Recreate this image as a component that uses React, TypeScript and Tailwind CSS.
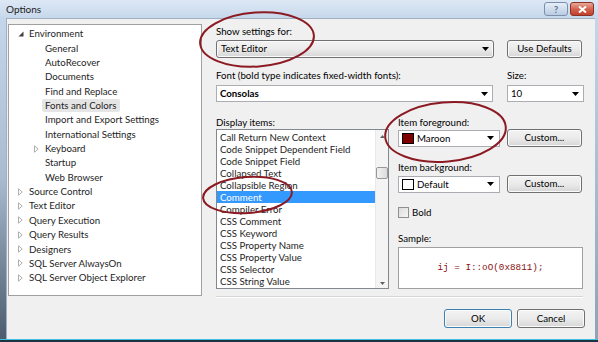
import React from "react";

const BTN =
  "flex items-center justify-center rounded-[3px] border border-[#707070] bg-gradient-to-b from-[#f3f3f3] via-[#ebebeb] to-[#d6d6d6] shadow-[inset_0_0_0_1px_#fbfbfb] leading-none";

function Arrow() {
  return (
    <svg width="7" height="4" viewBox="0 0 7 4">
      <path d="M0 0H7L3.5 4Z" fill="#000" />
    </svg>
  );
}

function Expanded() {
  return (
    <svg width="6" height="6" viewBox="0 0 6 6">
      <path d="M5.5 0.5V5.5H0.5Z" fill="#404040" />
    </svg>
  );
}

function Collapsed() {
  return (
    <svg width="5" height="8" viewBox="0 0 5 8">
      <path d="M0.5 0.8L4.2 4L0.5 7.2Z" fill="#fff" stroke="#a6a6a6" strokeWidth="0.9" />
    </svg>
  );
}

type Node = { label: string; level: 0 | 1; icon?: "exp" | "col"; selected?: boolean };

const tree: Node[] = [
  { label: "Environment", level: 0, icon: "exp" },
  { label: "General", level: 1 },
  { label: "AutoRecover", level: 1 },
  { label: "Documents", level: 1 },
  { label: "Find and Replace", level: 1 },
  { label: "Fonts and Colors", level: 1, selected: true },
  { label: "Import and Export Settings", level: 1 },
  { label: "International Settings", level: 1 },
  { label: "Keyboard", level: 1, icon: "col" },
  { label: "Startup", level: 1 },
  { label: "Web Browser", level: 1 },
  { label: "Source Control", level: 0, icon: "col" },
  { label: "Text Editor", level: 0, icon: "col" },
  { label: "Query Execution", level: 0, icon: "col" },
  { label: "Query Results", level: 0, icon: "col" },
  { label: "Designers", level: 0, icon: "col" },
  { label: "SQL Server AlwaysOn", level: 0, icon: "col" },
  { label: "SQL Server Object Explorer", level: 0, icon: "col" },
];

const items = [
  "Call Return New Context",
  "Code Snippet Dependent Field",
  "Code Snippet Field",
  "Collapsed Text",
  "Collapsible Region",
  "Comment",
  "Compiler Error",
  "CSS Comment",
  "CSS Keyword",
  "CSS Property Name",
  "CSS Property Value",
  "CSS Selector",
  "CSS String Value",
];

export default function App() {
  return (
    <div className="relative h-[342px] w-[598px] overflow-hidden bg-[#c5d6ea] font-['Lato',sans-serif] text-[9.7px] text-black">
      {/* title bar */}
      <div className="flex h-[18px] items-start bg-gradient-to-b from-[#dde8f5] to-[#c7d8eb]">
        <div className="pl-[6px] pt-[3px] text-[10px] leading-[12px] text-[#1b1b1b]">Options</div>
        <div className="ml-auto flex gap-[2px] pr-[4px] pt-[2px]">
          <div className="flex h-[14px] w-[24px] items-center justify-center rounded-[3px] border border-[#7d8fa8] bg-gradient-to-b from-[#e6eef8] to-[#b9cce3] text-[9px] font-bold leading-none text-[#5a6a80]">
            ?
          </div>
          <div className="flex h-[14px] w-[24px] items-center justify-center rounded-[3px] border border-[#8a3228] bg-gradient-to-b from-[#e8a89a] via-[#d3634f] to-[#c0402c]">
            <svg width="9" height="7" viewBox="0 0 9 7">
              <path d="M1 0.5L8 6.5M8 0.5L1 6.5" stroke="#fff" strokeWidth="2" />
            </svg>
          </div>
        </div>
      </div>

      {/* body */}
      <div className="flex h-[321px]">
        <div className="w-[6px] bg-gradient-to-b from-[#c5d6ea] via-[#a9bbd0] to-[#4d5d6e]" />
        <div className="flex w-[589px] border-l border-t border-[#9fb0c4] bg-[#f0f0f0]">
          {/* tree */}
          <div className="ml-[1px] mt-[5px] h-[272px] w-[194px] border border-[#a0a0a0] bg-white pt-[1.5px]">
            {tree.map((n) => (
              <div
                key={n.label}
                className={`flex h-[14.36px] items-center ${n.level === 0 ? "pl-[9px]" : "pl-[25px]"}`}
              >
                <div className="flex w-[11px] items-center">
                  {n.icon === "exp" ? <Expanded /> : n.icon === "col" ? <Collapsed /> : null}
                </div>
                <div
                  className={`whitespace-nowrap leading-[13px] ${
                    n.selected ? "-ml-[3.5px] rounded-[2px] bg-[#e5e5e5] px-[3.5px]" : ""
                  } text-[#1e1e1e]`}
                >
                  {n.label}
                </div>
              </div>
            ))}
          </div>

          {/* right panel */}
          <div className="ml-[14px] flex w-[369px] flex-col">
            <div className="mt-[6px] leading-[12px]">Show settings for:</div>
            <div className="mt-[3px] flex">
              <div className={`${BTN} h-[18px] w-[278px] !justify-between pl-[4px] pr-[4px]`}>
                <span>Text Editor</span>
                <Arrow />
              </div>
              <div className={`${BTN} ml-[13px] h-[18px] w-[75px]`}>Use Defaults</div>
            </div>

            <div className="mt-[11px] flex leading-[12px]">
              <div className="w-[291px]">Font (bold type indicates fixed-width fonts):</div>
              <div>Size:</div>
            </div>
            <div className="mt-[4px] flex">
              <div className="flex h-[17px] w-[277px] items-center justify-between border border-[#abadb3] bg-white pl-[3px] pr-[4px]">
                <span className="font-bold">Consolas</span>
                <Arrow />
              </div>
              <div className="ml-[14px] flex h-[17px] w-[77px] items-center justify-between border border-[#abadb3] bg-white pl-[3px] pr-[4px]">
                <span>10</span>
                <Arrow />
              </div>
            </div>

            <div className="flex">
              {/* display items */}
              <div className="flex w-[173px] flex-col">
                <div className="mt-[14px] leading-[12px]">Display items:</div>
                <div className="mt-[1px] flex h-[160px] border border-[#828790] bg-white">
                  <div className="flex-1 pt-[0.7px]">
                    {items.map((t) => (
                      <div
                        key={t}
                        className={`flex h-[12.05px] items-center whitespace-nowrap pl-[3px] leading-[12px] ${
                          t === "Comment" ? "bg-[#3399ff] text-white" : "text-[#1e1e1e]"
                        }`}
                      >
                        {t}
                      </div>
                    ))}
                  </div>
                  <div className="relative w-[13px] border-l border-[#e8e8e8] bg-[#f4f4f4]">
                    <div className="flex h-[12px] items-center justify-center">
                      <svg width="5" height="3" viewBox="0 0 5 3">
                        <path d="M0 3H5L2.5 0Z" fill="#606060" />
                      </svg>
                    </div>
                    <div className="ml-[0px] mt-[25px] h-[12px] w-[12px] rounded-[2px] border border-[#979797] bg-gradient-to-r from-[#f2f2f2] to-[#dcdcdc]" />
                    <div className="absolute bottom-[3px] left-0 flex w-full justify-center">
                      <svg width="5" height="3" viewBox="0 0 5 3">
                        <path d="M0 0H5L2.5 3Z" fill="#606060" />
                      </svg>
                    </div>
                  </div>
                </div>
              </div>

              {/* item settings */}
              <div className="ml-[9px] flex w-[187px] flex-col">
                <div className="mt-[14px] leading-[12px]">Item foreground:</div>
                <div className="mt-[1px] flex items-center">
                  <div className="flex h-[17px] w-[102px] items-center border border-[#abadb3] bg-white pl-[3px] pr-[5px]">
                    <div className="h-[11px] w-[12px] border border-black bg-[#800000]" />
                    <span className="ml-[3px]">Maroon</span>
                    <span className="ml-auto">
                      <Arrow />
                    </span>
                  </div>
                  <div className={`${BTN} ml-[7px] h-[18px] w-[75px]`}>Custom...</div>
                </div>

                <div className="mt-[14px] leading-[12px]">Item background:</div>
                <div className="mt-[2px] flex items-center">
                  <div className="flex h-[17px] w-[102px] items-center border border-[#abadb3] bg-white pl-[3px] pr-[5px]">
                    <div className="h-[11px] w-[12px] border border-black bg-white" />
                    <span className="ml-[3px]">Default</span>
                    <span className="ml-auto">
                      <Arrow />
                    </span>
                  </div>
                  <div className={`${BTN} ml-[7px] h-[18px] w-[75px]`}>Custom...</div>
                </div>

                <div className="mt-[13px] flex items-center">
                  <div className="h-[11px] w-[11px] border border-[#8e8f8f] bg-gradient-to-br from-[#dcdcdc] to-[#f6f6f6]" />
                  <span className="ml-[3px] leading-[12px]">Bold</span>
                </div>

                <div className="mt-[14px] leading-[12px]">Sample:</div>
                <div className="mt-[3px] flex h-[42px] w-[185px] items-center justify-center border border-[#a0a0a0] bg-white">
                  <span className="font-['Liberation_Mono',monospace] text-[9.3px] text-[#8a1010]">
                    ij = I::oO(0x8811);
                  </span>
                </div>
              </div>
            </div>

            <div className="mt-[7px] h-[2px] w-[367px] border-t border-b border-t-[#d5d5d5] border-b-white" />

            <div className="mt-[11px] flex justify-end gap-[5px]">
              <div className={`${BTN} h-[19px] w-[68px] !border-[#3c7fb1] shadow-[inset_0_0_0_1px_#bde6fa]`}>OK</div>
              <div className={`${BTN} h-[19px] w-[68px]`}>Cancel</div>
            </div>
          </div>
        </div>
        <div className="w-[3px] bg-gradient-to-b from-[#c5d6ea] to-[#8fa2b8]" />
      </div>
      <div className="h-[1px] bg-[#3cc2e4]" />
      <div className="h-[2px] bg-[#1d3440]" />

      {/* annotation ellipses */}
      <svg className="pointer-events-none absolute left-0 top-0" width="598" height="342">
        <g fill="none" stroke="#8b1a22" strokeWidth="2">
          <ellipse cx="257" cy="39.5" rx="57" ry="27" transform="rotate(-4 257 39.5)" />
          <ellipse cx="445.5" cy="132" rx="60.5" ry="29.5" transform="rotate(-5 445.5 132)" />
          <ellipse cx="247.5" cy="195" rx="44.5" ry="18" transform="rotate(-4 247.5 195)" />
        </g>
      </svg>
    </div>
  );
}
